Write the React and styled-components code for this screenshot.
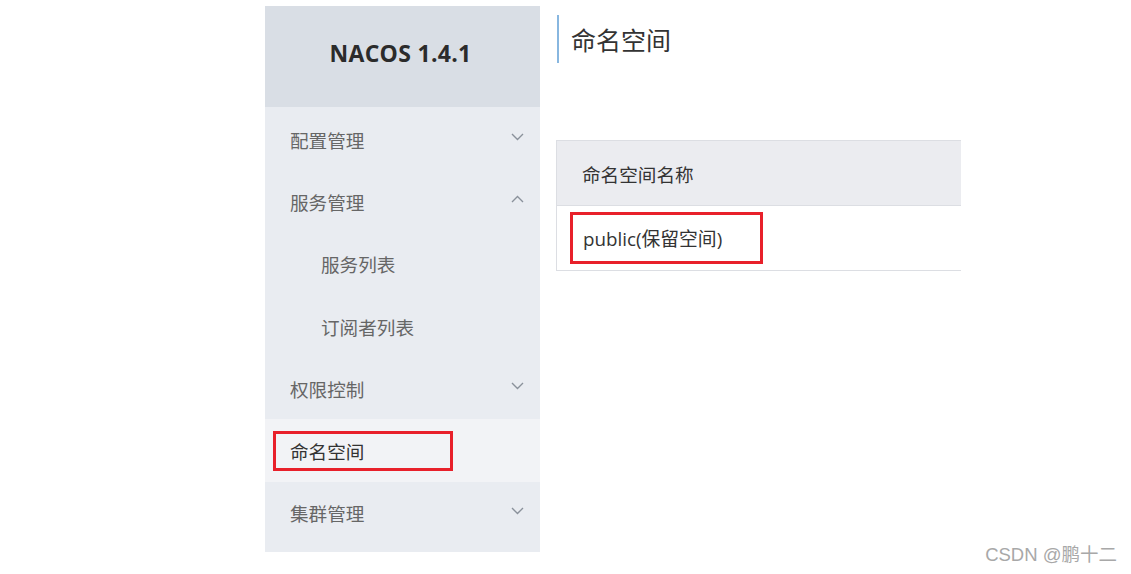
import React from 'react';
import styled, { createGlobalStyle } from 'styled-components';

const GlobalStyle = createGlobalStyle`
  html, body {
    margin: 0;
    padding: 0;
    background: #ffffff;
  }
  body {
    font-family: 'Open Sans', 'Noto Sans CJK SC', sans-serif;
  }
`;

const Page = styled.div`
  position: relative;
  display: flex;
  align-items: flex-start;
  width: 1131px;
  height: 574px;
  padding: 6px 0 0 265px;
  box-sizing: border-box;
  overflow: hidden;
`;

const Sidebar = styled.aside`
  width: 275px;
  height: 546px;
  display: flex;
  flex-direction: column;
  background: #e9ecf1;
`;

const Brand = styled.div`
  height: 101px;
  flex-shrink: 0;
  display: flex;
  align-items: center;
  justify-content: center;
  padding: 0 4px 8px 0;
  box-sizing: border-box;
  background: #d9dee5;
  color: #2b2b2b;
  font-family: 'Open Sans', 'Noto Sans', sans-serif;
  font-weight: 700;
  font-size: 23px;
  letter-spacing: 0.3px;
`;

const Menu = styled.ul`
  list-style: none;
  margin: 0;
  padding: 1px 0 0;
`;

const MenuItem = styled.li`
  height: 62.3px;
  display: flex;
  align-items: center;
  justify-content: space-between;
  padding: 0 16px 0 ${(p) => (p.sub ? 56 : 25)}px;
  box-sizing: border-box;
  background: ${(p) => (p.active ? '#f2f3f6' : 'transparent')};
  color: ${(p) => (p.active ? '#333' : '#666')};
  font-family: 'Noto Sans CJK SC', sans-serif;
  font-size: 18.6px;
`;

const Marked = styled.span`
  display: flex;
  align-items: center;
  width: 180px;
  height: 40px;
  margin-left: ${(p) => p.offset}px;
  padding-left: ${(p) => -p.offset - 3}px;
  border: 3px solid #e8202a;
  box-sizing: border-box;
`;

const Chevron = ({ up }) => (
  <svg width="13" height="8" viewBox="0 0 13 8" style={{ marginTop: -4 }}>
    <path
      d={up ? 'M1 7 L6.5 1.5 L12 7' : 'M1 1 L6.5 6.5 L12 1'}
      fill="none"
      stroke="#8a919b"
      strokeWidth="1.4"
    />
  </svg>
);

const Content = styled.main`
  margin-left: 16px;
  display: flex;
  flex-direction: column;
`;

const Title = styled.h1`
  margin: 9px 0 0 1px;
  height: 48px;
  display: flex;
  align-items: center;
  padding-left: 12px;
  border-left: 2px solid #88b7e0;
  color: #333;
  font-family: 'Noto Sans CJK SC', sans-serif;
  font-weight: 400;
  font-size: 25px;
`;

const Table = styled.div`
  margin-top: 77px;
  width: 404px;
  border: 1px solid #dcdee3;
  border-right: none;
`;

const HeadRow = styled.div`
  height: 64px;
  display: flex;
  align-items: center;
  padding-left: 25px;
  background: #ebecf0;
  border-bottom: 1px solid #dcdee3;
  color: #333;
  font-family: 'Noto Sans CJK SC', sans-serif;
  font-size: 18.6px;
`;

const BodyRow = styled.div`
  height: 64px;
  display: flex;
  align-items: center;
  padding-left: 13px;
  background: #fff;
  color: #333;
  font-family: 'Open Sans', 'Noto Sans CJK SC', sans-serif;
  font-size: 18.8px;
`;

const CellMark = styled.span`
  display: flex;
  align-items: center;
  width: 193px;
  height: 52px;
  padding-left: 10px;
  border: 3px solid #e8202a;
  box-sizing: border-box;
`;

const Watermark = styled.div`
  position: absolute;
  right: 14px;
  bottom: 8px;
  color: #a8a8a8;
  font-family: 'Liberation Sans', 'Noto Sans CJK SC', sans-serif;
  font-size: 18.5px;
`;

const menu = [
  { label: '配置管理', arrow: 'down' },
  { label: '服务管理', arrow: 'up' },
  { label: '服务列表', sub: true },
  { label: '订阅者列表', sub: true },
  { label: '权限控制', arrow: 'down' },
  { label: '命名空间', active: true },
  { label: '集群管理', arrow: 'down' },
];

const App = () => (
  <>
    <GlobalStyle />
    <Page>
      <Sidebar>
        <Brand>NACOS 1.4.1</Brand>
        <Menu>
          {menu.map((item) => (
            <MenuItem key={item.label} sub={item.sub} active={item.active}>
              {item.active ? <Marked offset={-17}>{item.label}</Marked> : <span>{item.label}</span>}
              {item.arrow && <Chevron up={item.arrow === 'up'} />}
            </MenuItem>
          ))}
        </Menu>
      </Sidebar>
      <Content>
        <Title>命名空间</Title>
        <Table>
          <HeadRow>命名空间名称</HeadRow>
          <BodyRow>
            <CellMark>public(保留空间)</CellMark>
          </BodyRow>
        </Table>
      </Content>
      <Watermark>CSDN @鹏十二</Watermark>
    </Page>
  </>
);

export default App;
